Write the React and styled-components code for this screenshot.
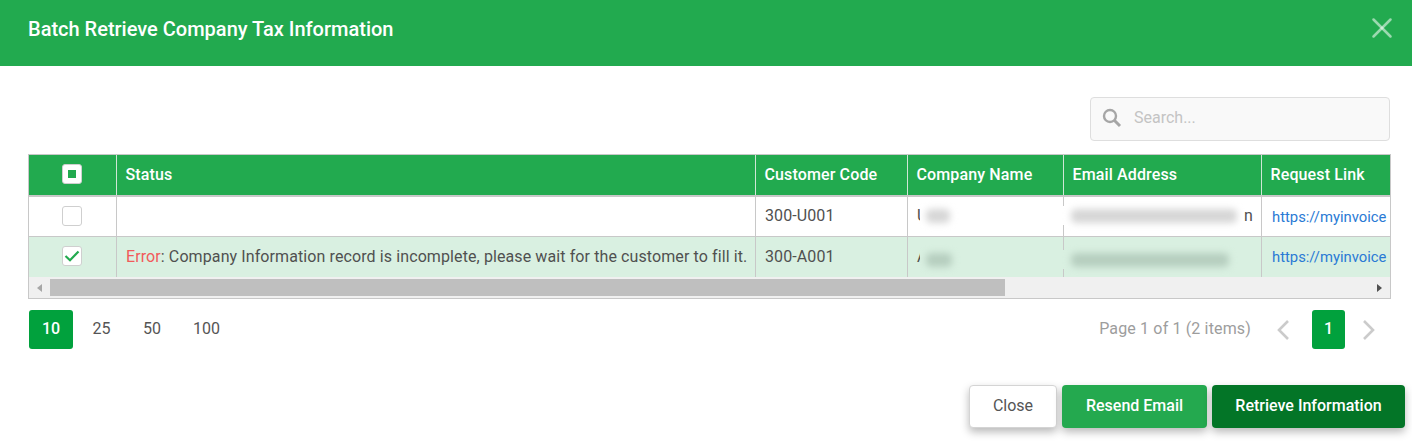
import React from 'react';
import styled, {createGlobalStyle} from 'styled-components';
import {X} from 'lucide-react';

const GlobalStyle = createGlobalStyle`
    html, body {
        margin: 0;
        padding: 0;
        background: #fff;
        overflow: hidden;
        font-family: Roboto, "Liberation Sans", sans-serif;
    }
`

const Dialog = styled.div`
    width: 1412px;
    height: 447px;
    display: flex;
    flex-direction: column;
    overflow: hidden;
`
const Header = styled.div`
    height: 66px;
    flex: none;
    box-sizing: border-box;
    background-color: #22aa4f;
    padding: 0 13px 8px 28px;
    display: flex;
    align-items: center;
    justify-content: space-between;
`
const Title = styled.h1`
    margin: 0;
    font-size: 20px;
    font-weight: 500;
    color: #fff;
    line-height: 26px;
`
const CloseIcon = styled(X)`
    color: rgba(255,255,255,0.55);
    margin-top: -2px;
`
const Body = styled.div`
    padding: 31px 21px 0 28px;
`
const SearchRow = styled.div`
    display: flex;
    justify-content: flex-end;
    padding-right: 1px;
    margin-bottom: 13px;
`
const SearchBox = styled.div`
    width: 300px;
    height: 44px;
    box-sizing: border-box;
    background: #f9f9f9;
    border: 1px solid #dedede;
    border-radius: 4px;
    display: flex;
    align-items: center;
    padding: 0 0 2px 11px;
    gap: 12px;
`
const SearchText = styled.span`
    font-size: 16px;
    color: #c4c4c4;
    padding-bottom: 2px;
`
const Grid = styled.div`
    width: 1363px;
    box-sizing: border-box;
    border: 1px solid #c8c8c8;
`
const Row = styled.div`
    display: grid;
    grid-template-columns: 88px 639px 152px 156px 198px 1fr;
    height: ${props => props.height}px;
    background: ${props => props.bg};
    border-bottom: ${props => props.line}px solid #c8c8c8;
    box-sizing: border-box;
`
const HeadCell = styled.div`
    display: flex;
    align-items: center;
    padding: 0 0 2px 8.5px;
    color: #fff;
    font-size: 16px;
    font-weight: 500;
    letter-spacing: 0.13px;
    border-right: 1px solid #cfe6d6;
    &:last-child {
        border-right: none;
    }
`
const Cell = styled.div`
    position: relative;
    display: flex;
    align-items: center;
    padding: 0 0 2px ${props => props.pad || 9}px;
    color: #505050;
    font-size: 16px;
    letter-spacing: 0.1px;
    white-space: nowrap;
    border-right: 1px solid #c8c8c8;
    &:last-child {
        border-right: none;
    }
`
const CheckCell = styled(Cell)`
    justify-content: center;
    padding: 0 1px 2px 0;
`
const HeadCheckCell = styled(HeadCell)`
    justify-content: center;
    padding: 0 1px 2px 0;
`
const LinkCell = styled(Cell)`
    padding: 0 0 0 10px;
`
const CheckBox = styled.div`
    width: 20px;
    height: 20px;
    box-sizing: border-box;
    background: #fff;
    border: 1px solid #cfcfcf;
    border-radius: 3px;
    display: flex;
    align-items: center;
    justify-content: center;
`
const Dot = styled.div`
    width: 8px;
    height: 8px;
    background: #22aa4f;
`
const ErrorWord = styled.span`
    color: #f25a5a;
`
const Link = styled.a`
    color: #2a7ad5;
    font-size: 14.8px;
    letter-spacing: 0;
`
// censored patch lying over the text, as in the screenshot
const Patch = styled.div`
    position: absolute;
    left: ${props => props.left}px;
    top: ${props => props.top}px;
    width: ${props => props.w}px;
    height: ${props => props.h}px;
    background: ${props => props.color};
`
const Blur = styled.div`
    position: absolute;
    left: ${props => props.left}px;
    top: ${props => props.top}px;
    width: ${props => props.w}px;
    height: ${props => props.h}px;
    background: ${props => props.color};
    border-radius: 5px;
    filter: blur(3.5px);
`
const TailLetter = styled.span`
    position: absolute;
    left: 180px;
`
const ScrollBar = styled.div`
    height: 21px;
    background: #f0f0f0;
    display: flex;
    align-items: center;
    padding: 1px 0;
    box-sizing: border-box;
`
const ArrowBtn = styled.div`
    flex: none;
    width: 21px;
    display: flex;
    justify-content: center;
    opacity: ${props => props.dim ? 0.45 : 1};
`
const Thumb = styled.div`
    flex: none;
    width: 955px;
    height: 17px;
    background: #bfbfbf;
`
const Spring = styled.div`
    flex: 1;
`
const Pager = styled.div`
    display: flex;
    align-items: center;
    justify-content: space-between;
    margin-top: 11px;
    padding-left: 1px;
    padding-right: 15px;
    width: 1363px;
    box-sizing: border-box;
`
const Sizes = styled.div`
    display: flex;
    align-items: center;
`
const SizeBtn = styled.div`
    height: 39px;
    box-sizing: border-box;
    padding-bottom: 2px;
    min-width: ${props => props.wide}px;
    display: flex;
    align-items: center;
    justify-content: center;
    border-radius: 3px;
    font-size: 16px;
    font-weight: ${props => props.active ? 500 : 400};
    color: ${props => props.active ? '#fff' : '#555'};
    background: ${props => props.active ? '#01a13d' : 'transparent'};
`
const PageNav = styled.div`
    display: flex;
    align-items: center;
`
const PageInfo = styled.span`
    font-size: 16px;
    letter-spacing: 0.15px;
    color: #9d9d9d;
    padding-bottom: 2px;
    margin-right: 25px;
`
const PageNum = styled(SizeBtn)`
    min-width: 33px;
    margin: 0 17px 0 22px;
`
const Chevron = styled.svg`
    width: 14px;
    height: 22px;
    fill: none;
    stroke: #cbcbcb;
    stroke-width: 2.6;
`
const Footer = styled.div`
    display: flex;
    justify-content: flex-end;
    gap: 5px;
    margin-top: 36px;
    margin-right: -14px;
`
const Button = styled.div`
    height: 43px;
    width: ${props => props.w}px;
    box-sizing: border-box;
    padding-bottom: 2px;
    display: flex;
    align-items: center;
    justify-content: center;
    border-radius: 4px;
    font-size: 16px;
    font-weight: ${props => props.light ? 400 : 500};
    color: ${props => props.light ? '#555' : '#fff'};
    background: ${props => props.bg};
    border: ${props => props.light ? '1px solid #d4d4d4' : 'none'};
    box-shadow: 0 4px 8px rgba(0,0,0,0.28);
`

const GREEN = '#22aa4f'
const columns = ['Status', 'Customer Code', 'Company Name', 'Email Address', 'Request Link']
const sizes = [[44, '10', true], [57, '25'], [44, '50'], [65, '100']]

const rows = [
    {
        bg: '#fff', height: 40, line: 1, code: '300-U001', name: 'U', tail: 'n',
        blurColor: '#d6d6d6', checked: false,
        top: 9, namePatch: 36, nameBlur: 24, mailPatch: 182, mailBlur: 166
    },
    {
        bg: '#d9f0e1', height: 40, line: 0, code: '300-A001', name: 'A',
        blurColor: '#b6cebf', checked: true, status: true,
        top: 13, namePatch: 45, nameBlur: 26, mailPatch: 170, mailBlur: 158
    }
]

export default function App() {
    return (
        <Dialog>
            <GlobalStyle/>
            <Header>
                <Title>Batch Retrieve Company Tax Information</Title>
                <CloseIcon size={34} strokeWidth={1.8}/>
            </Header>
            <Body>
                <SearchRow>
                    <SearchBox>
                        <svg width="20" height="20" viewBox="0 0 20 20" fill="none" stroke="#a6a6a6">
                            <circle cx="8" cy="8" r="6" strokeWidth="2.4"/>
                            <path d="M12.5 12.5L18 18" strokeWidth="3"/>
                        </svg>
                        <SearchText>Search...</SearchText>
                    </SearchBox>
                </SearchRow>
                <Grid>
                    <Row bg={GREEN} height={42} line={2}>
                        <HeadCheckCell>
                            <CheckBox><Dot/></CheckBox>
                        </HeadCheckCell>
                        {columns.map(name => <HeadCell key={name}>{name}</HeadCell>)}
                    </Row>
                    {rows.map(row => (
                        <Row key={row.code} bg={row.bg} height={row.height} line={row.line}>
                            <CheckCell>
                                <CheckBox>
                                    {row.checked && (
                                        <svg width="16" height="12" viewBox="0 0 16 12" fill="none" stroke={GREEN} strokeWidth="2.2">
                                            <path d="M1.5 6L6 10.2L14.5 1.5"/>
                                        </svg>
                                    )}
                                </CheckBox>
                            </CheckCell>
                            <Cell>
                                {row.status && <span><ErrorWord>Error</ErrorWord>: Company Information record is incomplete, please wait for the customer to fill it.</span>}
                            </Cell>
                            <Cell>{row.code}</Cell>
                            <Cell>
                                {row.name}
                                <Patch left={12} top={row.top} w={row.namePatch} h={19} color={row.bg}/>
                                <Blur left={18} top={row.top + 3} w={row.nameBlur} h={14} color={row.blurColor}/>
                            </Cell>
                            <Cell>
                                {row.tail && <TailLetter>{row.tail}</TailLetter>}
                                <Patch left={-6} top={row.top} w={row.mailPatch} h={19} color={row.bg}/>
                                <Blur left={7} top={row.top + 3} w={row.mailBlur} h={14} color={row.blurColor}/>
                            </Cell>
                            <LinkCell>
                                <Link>https://myinvoice</Link>
                            </LinkCell>
                        </Row>
                    ))}
                    <ScrollBar>
                        <ArrowBtn dim>
                            <svg width="6" height="8" viewBox="0 0 6 8"><path d="M5 0V8L0 4Z" fill="#505050"/></svg>
                        </ArrowBtn>
                        <Thumb/>
                        <Spring/>
                        <ArrowBtn>
                            <svg width="6" height="8" viewBox="0 0 6 8"><path d="M0 0V8L5 4Z" fill="#505050"/></svg>
                        </ArrowBtn>
                    </ScrollBar>
                </Grid>
                <Pager>
                    <Sizes>
                        {sizes.map(([wide, label, active]) => (
                            <SizeBtn key={label} wide={wide} active={active}>{label}</SizeBtn>
                        ))}
                    </Sizes>
                    <PageNav>
                        <PageInfo>Page 1 of 1 (2 items)</PageInfo>
                        <Chevron viewBox="0 0 14 22"><path d="M12 2L3 11L12 20"/></Chevron>
                        <PageNum active>1</PageNum>
                        <Chevron viewBox="0 0 14 22"><path d="M2 2L11 11L2 20"/></Chevron>
                    </PageNav>
                </Pager>
                <Footer>
                    <Button light w={88} bg="#fff">Close</Button>
                    <Button w={145} bg="#24a94f">Resend Email</Button>
                    <Button w={193} bg="#037527">Retrieve Information</Button>
                </Footer>
            </Body>
        </Dialog>
    )
}
